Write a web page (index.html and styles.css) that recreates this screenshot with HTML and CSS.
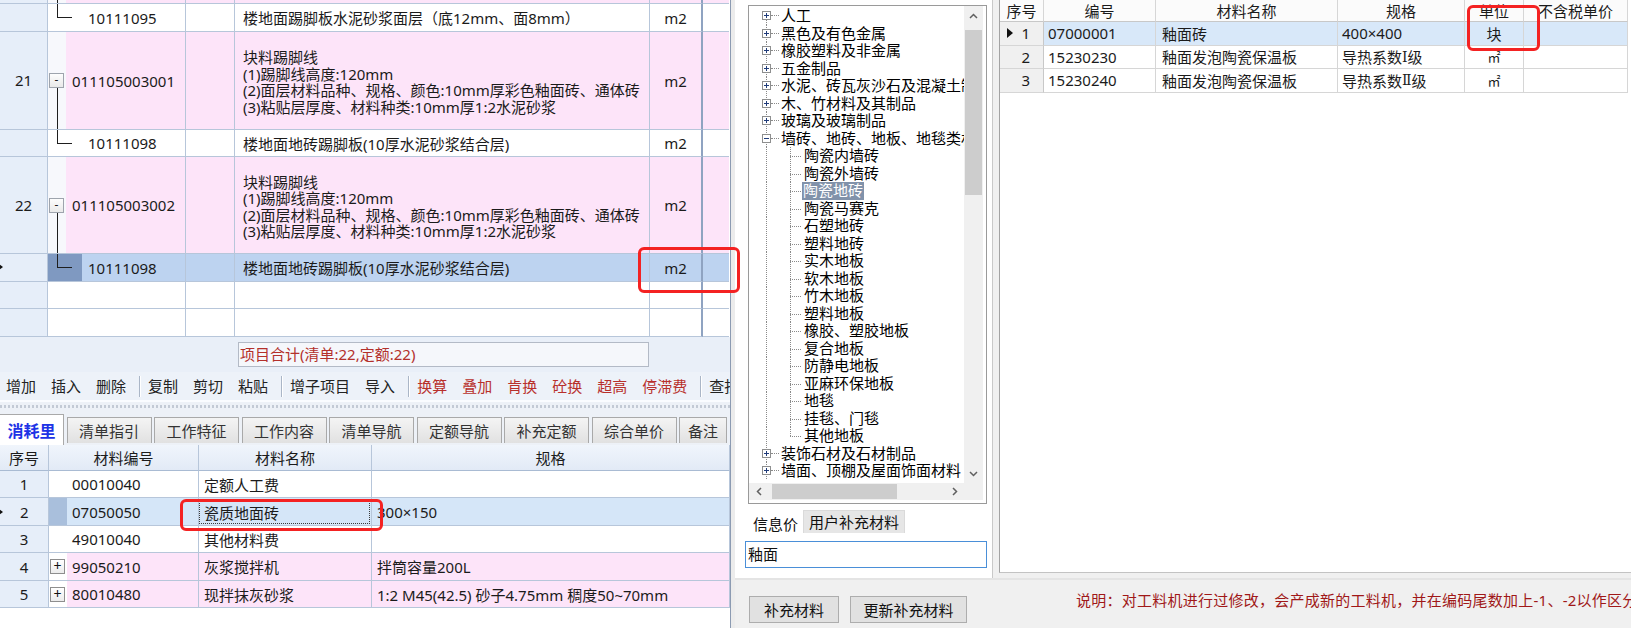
FILE: index.html
```html
<!DOCTYPE html>
<html lang="zh-CN">
<head>
<meta charset="utf-8">
<title>工料机</title>
<link rel="stylesheet" href="styles.css">
</head>
<body>
<div class="app">
  <div class="left">
    <div class="tg">
      <div class="tr pk h4">
        <div class="num"></div>
        <div class="c2"><span class="pg"><span class="vl full"></span></span></div>
        <div class="c3"></div><div class="c4"></div><div class="c5"></div><div class="c6"></div>
      </div>
      <div class="tr h28">
        <div class="num"></div>
        <div class="c2"><span class="cg"><span class="lt"></span><span class="sp"></span></span><span class="code">10111095</span></div>
        <div class="c3"></div><div class="c4">楼地面踢脚板水泥砂浆面层（底12mm、面8mm）</div><div class="c5">m2</div><div class="c6"></div>
      </div>
      <div class="tr pk h98">
        <div class="num">21</div>
        <div class="c2"><span class="pg"><span class="sp"></span><span class="box">-</span><span class="vl"></span></span><span class="code">011105003001</span></div>
        <div class="c3"></div>
        <div class="c4"><div class="ml"><div>块料踢脚线</div><div>(1)踢脚线高度:120mm</div><div>(2)面层材料品种、规格、颜色:10mm厚彩色釉面砖、通体砖</div><div>(3)粘贴层厚度、材料种类:10mm厚1:2水泥砂浆</div></div></div>
        <div class="c5">m2</div><div class="c6"></div>
      </div>
      <div class="tr h27">
        <div class="num"></div>
        <div class="c2"><span class="cg"><span class="lt"></span><span class="sp"></span></span><span class="code">10111098</span></div>
        <div class="c3"></div><div class="c4">楼地面地砖踢脚板(10厚水泥砂浆结合层)</div><div class="c5">m2</div><div class="c6"></div>
      </div>
      <div class="tr pk h97">
        <div class="num">22</div>
        <div class="c2"><span class="pg"><span class="sp"></span><span class="box">-</span><span class="vl"></span></span><span class="code">011105003002</span></div>
        <div class="c3"></div>
        <div class="c4"><div class="ml"><div>块料踢脚线</div><div>(1)踢脚线高度:120mm</div><div>(2)面层材料品种、规格、颜色:10mm厚彩色釉面砖、通体砖</div><div>(3)粘贴层厚度、材料种类:10mm厚1:2水泥砂浆</div></div></div>
        <div class="c5">m2</div><div class="c6"></div>
      </div>
      <div class="tr sel h28">
        <div class="num mkcell"><i class="mk"></i></div>
        <div class="c2"><span class="cg"><span class="lt"></span><span class="sp"></span></span><span class="code">10111098</span></div>
        <div class="c3"></div><div class="c4">楼地面地砖踢脚板(10厚水泥砂浆结合层)</div><div class="c5">m2</div><div class="c6"></div>
      </div>
      <div class="tr h27">
        <div class="num"></div><div class="c2"></div><div class="c3"></div><div class="c4"></div><div class="c5"></div><div class="c6"></div>
      </div>
      <div class="tr h28">
        <div class="num"></div><div class="c2"></div><div class="c3"></div><div class="c4"></div><div class="c5"></div><div class="c6"></div>
      </div>
    </div>

    <div class="status"><div class="sbox">项目合计(清单:22,定额:22)</div></div>

    <div class="toolbar">
      <span class="tb">增加</span><span class="tb">插入</span><span class="tb">删除</span><span class="sep"></span>
      <span class="tb">复制</span><span class="tb">剪切</span><span class="tb">粘贴</span><span class="sep"></span>
      <span class="tb">增子项目</span><span class="tb">导入</span><span class="sep"></span>
      <span class="tb r">换算</span><span class="tb r">叠加</span><span class="tb r">肯换</span><span class="tb r">砼换</span><span class="tb r">超高</span><span class="tb r">停滞费</span><span class="sep"></span>
      <span class="tb">查找</span>
    </div>

    <div class="splitter"></div>

    <div class="tabs">
      <div class="tab act">消耗里</div>
      <div class="tab">清单指引</div>
      <div class="tab">工作特征</div>
      <div class="tab">工作内容</div>
      <div class="tab">清单导航</div>
      <div class="tab">定额导航</div>
      <div class="tab">补充定额</div>
      <div class="tab">综合单价</div>
      <div class="tab last">备注</div>
    </div>

    <div class="bgd">
      <div class="br bh">
        <div>序号</div><div>材料编号</div><div>材料名称</div><div>规格</div>
      </div>
      <div class="br r27">
        <div class="num">1</div><div class="b2"><span class="bg0"></span><span class="code2">00010040</span></div><div class="b3">定额人工费</div><div class="b4"></div>
      </div>
      <div class="br r28 bsel">
        <div class="num"><i class="mk"></i><span class="nn">2</span></div><div class="b2"><span class="bg0"></span><span class="code2">07050050</span></div><div class="b3"><div class="focus">瓷质地面砖</div></div><div class="b4">300×150</div>
      </div>
      <div class="br r27">
        <div class="num">3</div><div class="b2"><span class="bg0"></span><span class="code2">49010040</span></div><div class="b3">其他材料费</div><div class="b4"></div>
      </div>
      <div class="br r28 bpk">
        <div class="num">4</div><div class="b2"><span class="bg0"><span class="pbox">+</span></span><span class="code2">99050210</span></div><div class="b3">灰浆搅拌机</div><div class="b4">拌筒容量200L</div>
      </div>
      <div class="br r27 bpk">
        <div class="num">5</div><div class="b2"><span class="bg0"><span class="pbox">+</span></span><span class="code2">80010480</span></div><div class="b3">现拌抹灰砂浆</div><div class="b4">1:2 M45(42.5) 砂子4.75mm 稠度50~70mm</div>
      </div>
    </div>
  </div>

  <div class="right">
    <div class="rmain">
      <div class="lpane">
        <div class="treebox">
          <div class="tarea">
            <div class="tcontent">
              <div class="ti"><span class="g first"><svg class="bx" width="9" height="9" viewBox="0 0 9 9"><rect x=".5" y=".5" width="8" height="8" fill="#fff" stroke="#8e8f8f"/><path d="M2 4.5h5M4.5 2v5" stroke="#203c7a"/></svg></span><span class="hc"></span>人工</div>
              <div class="ti"><span class="g"><svg class="bx" width="9" height="9" viewBox="0 0 9 9"><rect x=".5" y=".5" width="8" height="8" fill="#fff" stroke="#8e8f8f"/><path d="M2 4.5h5M4.5 2v5" stroke="#203c7a"/></svg></span><span class="hc"></span>黑色及有色金属</div>
              <div class="ti"><span class="g"><svg class="bx" width="9" height="9" viewBox="0 0 9 9"><rect x=".5" y=".5" width="8" height="8" fill="#fff" stroke="#8e8f8f"/><path d="M2 4.5h5M4.5 2v5" stroke="#203c7a"/></svg></span><span class="hc"></span>橡胶塑料及非金属</div>
              <div class="ti"><span class="g"><svg class="bx" width="9" height="9" viewBox="0 0 9 9"><rect x=".5" y=".5" width="8" height="8" fill="#fff" stroke="#8e8f8f"/><path d="M2 4.5h5M4.5 2v5" stroke="#203c7a"/></svg></span><span class="hc"></span>五金制品</div>
              <div class="ti"><span class="g"><svg class="bx" width="9" height="9" viewBox="0 0 9 9"><rect x=".5" y=".5" width="8" height="8" fill="#fff" stroke="#8e8f8f"/><path d="M2 4.5h5M4.5 2v5" stroke="#203c7a"/></svg></span><span class="hc"></span>水泥、砖瓦灰沙石及混凝土制品</div>
              <div class="ti"><span class="g"><svg class="bx" width="9" height="9" viewBox="0 0 9 9"><rect x=".5" y=".5" width="8" height="8" fill="#fff" stroke="#8e8f8f"/><path d="M2 4.5h5M4.5 2v5" stroke="#203c7a"/></svg></span><span class="hc"></span>木、竹材料及其制品</div>
              <div class="ti"><span class="g"><svg class="bx" width="9" height="9" viewBox="0 0 9 9"><rect x=".5" y=".5" width="8" height="8" fill="#fff" stroke="#8e8f8f"/><path d="M2 4.5h5M4.5 2v5" stroke="#203c7a"/></svg></span><span class="hc"></span>玻璃及玻璃制品</div>
              <div class="ti"><span class="g"><svg class="bx" width="9" height="9" viewBox="0 0 9 9"><rect x=".5" y=".5" width="8" height="8" fill="#fff" stroke="#8e8f8f"/><path d="M2 4.5h5" stroke="#203c7a"/></svg></span><span class="hc"></span>墙砖、地砖、地板、地毯类材料</div>
              <div class="ti"><span class="g"></span><span class="g2"></span><span class="cl"></span>陶瓷内墙砖</div>
              <div class="ti"><span class="g"></span><span class="g2"></span><span class="cl"></span>陶瓷外墙砖</div>
              <div class="ti"><span class="g"></span><span class="g2"></span><span class="cl"></span><span class="tsel">陶瓷地砖</span></div>
              <div class="ti"><span class="g"></span><span class="g2"></span><span class="cl"></span>陶瓷马赛克</div>
              <div class="ti"><span class="g"></span><span class="g2"></span><span class="cl"></span>石塑地砖</div>
              <div class="ti"><span class="g"></span><span class="g2"></span><span class="cl"></span>塑料地砖</div>
              <div class="ti"><span class="g"></span><span class="g2"></span><span class="cl"></span>实木地板</div>
              <div class="ti"><span class="g"></span><span class="g2"></span><span class="cl"></span>软木地板</div>
              <div class="ti"><span class="g"></span><span class="g2"></span><span class="cl"></span>竹木地板</div>
              <div class="ti"><span class="g"></span><span class="g2"></span><span class="cl"></span>塑料地板</div>
              <div class="ti"><span class="g"></span><span class="g2"></span><span class="cl"></span>橡胶、塑胶地板</div>
              <div class="ti"><span class="g"></span><span class="g2"></span><span class="cl"></span>复合地板</div>
              <div class="ti"><span class="g"></span><span class="g2"></span><span class="cl"></span>防静电地板</div>
              <div class="ti"><span class="g"></span><span class="g2"></span><span class="cl"></span>亚麻环保地板</div>
              <div class="ti"><span class="g"></span><span class="g2"></span><span class="cl"></span>地毯</div>
              <div class="ti"><span class="g"></span><span class="g2"></span><span class="cl"></span>挂毯、门毯</div>
              <div class="ti"><span class="g"></span><span class="g2"></span><span class="cl lastc"></span>其他地板</div>
              <div class="ti"><span class="g"><svg class="bx" width="9" height="9" viewBox="0 0 9 9"><rect x=".5" y=".5" width="8" height="8" fill="#fff" stroke="#8e8f8f"/><path d="M2 4.5h5M4.5 2v5" stroke="#203c7a"/></svg></span><span class="hc"></span>装饰石材及石材制品</div>
              <div class="ti"><span class="g"><svg class="bx" width="9" height="9" viewBox="0 0 9 9"><rect x=".5" y=".5" width="8" height="8" fill="#fff" stroke="#8e8f8f"/><path d="M2 4.5h5M4.5 2v5" stroke="#203c7a"/></svg></span><span class="hc"></span>墙面、顶棚及屋面饰面材料</div>
            </div>
            <div class="vs">
              <span class="arr"><svg width="9" height="6" viewBox="0 0 9 6"><path d="M1 5l3.5-3.5L8 5" fill="none" stroke="#606060" stroke-width="1.5"/></svg></span>
              <span class="vthumb"></span>
              <span class="vtrack"></span>
              <span class="arr"><svg width="9" height="6" viewBox="0 0 9 6"><path d="M1 1l3.5 3.5L8 1" fill="none" stroke="#606060" stroke-width="1.5"/></svg></span>
            </div>
          </div>
          <div class="hs">
            <span class="harr"><svg width="6" height="9" viewBox="0 0 6 9"><path d="M5 1L1.5 4.5 5 8" fill="none" stroke="#606060" stroke-width="1.5"/></svg></span>
            <span class="hthumb"></span>
            <span class="htrack"></span>
            <span class="harr"><svg width="6" height="9" viewBox="0 0 6 9"><path d="M1 1l3.5 3.5L1 8" fill="none" stroke="#606060" stroke-width="1.5"/></svg></span>
            <span class="corner"></span>
          </div>
        </div>
        <div class="itabs">
          <div class="itab on">信息价</div>
          <div class="itab">用户补充材料</div>
        </div>
        <div class="ibody">
          <div class="inp">釉面</div>
        </div>
      </div>
      <div class="rgw">
        <div class="rg">
          <div class="rr rh">
            <div>序号</div><div>编号</div><div>材料名称</div><div>规格</div><div>单位</div><div>不含税单价</div>
          </div>
          <div class="rr rsel">
            <div class="rn"><i class="rarrow"></i><span>1</span></div><div class="l4">07000001</div><div class="l6">釉面砖</div><div class="l4">400×400</div><div class="ctr">块</div><div></div>
          </div>
          <div class="rr">
            <div class="rn"><span>2</span></div><div class="l4">15230230</div><div class="l6">釉面发泡陶瓷保温板</div><div class="l4">导热系数<span class="rom">Ⅰ</span>级</div><div class="ctr sq">㎡</div><div></div>
          </div>
          <div class="rr">
            <div class="rn"><span>3</span></div><div class="l4">15230240</div><div class="l6">釉面发泡陶瓷保温板</div><div class="l4">导热系数<span class="rom">Ⅱ</span>级</div><div class="ctr sq">㎡</div><div></div>
          </div>
        </div>
      </div>
    </div>
    <div class="bbar">
      <div class="btn b1">补充材料</div>
      <div class="btn b2b">更新补充材料</div>
      <div class="note">说明：对工料机进行过修改，会产成新的工料机，并在编码尾数加上-1、-2以作区分</div>
    </div>
  </div>

  <div class="anno a1"></div>
  <div class="anno a2"></div>
  <div class="anno a3"></div>
</div>
</body>
</html>
```

FILE: styles.css
```css
* { box-sizing: border-box; }
html, body { margin: 0; padding: 0; }
body {
  width: 1631px;
  height: 628px;
  overflow: hidden;
  font-family: "Noto Sans", "Noto Sans CJK SC", sans-serif;
  font-size: 15px;
  color: #1b1b1b;
  background: #fff;
}
.app { position: relative; display: flex; width: 1631px; height: 628px; }

/* ---------- left window ---------- */
.left {
  width: 731px;
  flex: none;
  border-right: 1px solid #8c9bb2;
  background: #fff;
  display: flex;
  flex-direction: column;
  overflow: hidden;
}
.tg { height: 337px; overflow: hidden; flex: none; }
.tr {
  display: grid;
  grid-template-columns: 48px 138px 49px 415px 53px 26px;
}
.tr > div {
  border-right: 1px solid #b7c6da;
  border-bottom: 1px solid #b7c6da;
  display: flex;
  align-items: center;
  overflow: hidden;
  white-space: nowrap;
  background: #fff;
}
.tr > .num { background: #e6eef9; justify-content: center; padding-bottom: 1px; }
.tr > .c2 { align-items: stretch; }
.tr > .c4 { padding-left: 8px; }
.tr > .c5 { border-right: 2px solid #8fa3c1; justify-content: center; }
.tr > .c6 { border-right: none; }
.h4 { height: 4px; }
.h27 { height: 27px; }
.h28 { height: 28px; }
.h97 { height: 97px; }
.h98 { height: 98px; }
.pk > div:not(.num) { background: #fde4f9; }
.sel > div:not(.num) { background: #bdd3f0; }

.code { display: flex; align-items: center; padding-left: 6px; }
.pg {
  width: 18px; flex: none;
  display: flex; flex-direction: column;
  background: #f7f8fc;
}
.pg .sp { flex: 1; }
.pg .box {
  width: 15px; height: 15px; margin-left: 1px; flex: none;
  border: 1px solid #9ea4ad;
  background: linear-gradient(#fdfdfd, #e9e9e9);
  font-size: 12px; line-height: 11px; text-align: center; color: #222;
}
.pg .vl { flex: 1; margin-left: 9px; width: 0; border-left: 1px solid #1e1e1e; }
.cg {
  width: 34px; flex: none;
  display: flex; flex-direction: column;
}
.sel .cg { background: #7f99c1; }
.cg .lt {
  flex: 1;
  margin-left: 9px; width: 15px;
  border-left: 1px solid #1e1e1e;
  border-bottom: 1px solid #1e1e1e;
}
.cg .sp { flex: 1; }
.ml { padding-top: 3px; white-space: nowrap; }
.ml > div { height: 16.5px; line-height: 16.5px; }
.mkcell { justify-content: flex-start !important; }
.mk {
  display: inline-block; width: 0; height: 0;
  border-left: 4px solid #111;
  border-top: 3px solid transparent;
  border-bottom: 3px solid transparent;
  margin-left: -1px;
}

/* status + toolbar */
.status {
  height: 35px; flex: none;
  background: #e9eff8;
  padding: 5px 0 0 238px;
}
.sbox {
  width: 411px; height: 25px;
  border: 1px solid #b3bac6;
  background: #f5f7fb;
  color: #b3302b;
  padding-left: 1px;
  line-height: 22px;
  font-size: 15px;
}
.toolbar {
  height: 28px; flex: none;
  background: #edf2f9;
  display: flex; align-items: center;
  padding-left: 6px;
  white-space: nowrap;
  overflow: hidden;
  line-height: 20px;
}
.tb { margin-right: 15px; flex: none; color: #222; }
.tb.r { color: #b8302c; }
.sep {
  width: 2px; height: 21px; flex: none;
  margin: 0 7px 0 -2px;
  border-left: 1px solid #aab6c7;
  border-right: 1px solid #ffffff;
}
.splitter {
  height: 15px; flex: none;
  background: #edf1f7;
  border-top: 2px solid #fafcff;
  padding-top: 3px;
}
.splitter::before {
  content: "";
  display: block;
  height: 3px;
  background: repeating-linear-gradient(90deg, #c3cad5 0 2px, transparent 2px 4px);
}
.tabs {
  height: 30px; flex: none;
  display: flex; align-items: flex-end;
  background: #edf1f7;
}
.tab {
  width: 85px; height: 26px; flex: none;
  margin: 0 0 2px 2.5px;
  border: 1px solid #a9a9a9;
  border-bottom: none;
  background: linear-gradient(#f4f4f4, #e1e1e1);
  color: #333;
  display: flex; align-items: center; justify-content: center;
  font-size: 15px;
}
.tab.act {
  width: 64px; height: 31px; margin: 0;
  background: #fff;
  color: #1d33e6;
  font-weight: bold;
  font-size: 16px;
  border-left: none;
}
.tab.last { width: 48px; }

/* bottom grid */
.bgd { flex: none; }
.br {
  display: grid;
  grid-template-columns: 49px 150px 173px 358px;
}
.br > div {
  border-right: 1px solid #b7c6da;
  border-bottom: 1px solid #b7c6da;
  display: flex; align-items: center;
  white-space: nowrap; overflow: hidden;
  background: #fff;
}
.bh { height: 26px; }
.bh > div {
  background: linear-gradient(#f0f5fc, #e2eaf6);
  justify-content: center;
  border-bottom-color: #a9bbd3;
}
.r27 { height: 27px; }
.r28 { height: 28px; }
.br > .num { background: #e6eef9; justify-content: center; }
.bsel > .num { justify-content: flex-start; }
.bsel .nn { margin-left: 17px; }
.b2 { align-items: stretch !important; }
.bg0 { width: 18px; flex: none; display: flex; align-items: center; }
.code2 { display: flex; align-items: center; padding-left: 5px; }
.b3, .b4 { padding-left: 5px; }
.bsel > div:not(.num) { background: #d5e6f8; }
.bsel .bg0 { background: #a9bfdc; }
.bpk > div:not(.num) { background: #fde4f9; }
.bpk .bg0 { background: #fff; }
.pbox {
  width: 15px; height: 15px; margin-left: 1px;
  border: 1px solid #8e8e8e;
  background: linear-gradient(#fff, #ececec);
  font-size: 14px; line-height: 12px; text-align: center; color: #111;
}
.b3 .focus {
  flex: 1; align-self: stretch;
  margin: 3px 1px 1px 0;
  border: 1px dotted #3a3a3a;
  padding-left: 4px;
  display: flex; align-items: center;
}
.bsel > .b3 { padding-left: 0; }

/* ---------- right dialog ---------- */
.right {
  flex: 1;
  display: flex; flex-direction: column;
  background: #ececec;
  padding-left: 4px;
}
.rmain { height: 578px; display: flex; background: #fff; flex: none; }
.lpane { width: 257px; flex: none; padding: 5px 0 0 13px; background: #fff; }
.treebox {
  width: 239px; height: 499px;
  border: 1px solid #9a9a9a;
  display: flex; flex-direction: column;
  background: #fff;
}
.tarea { height: 477px; display: flex; flex: none; }
.tcontent { width: 215px; flex: none; overflow: hidden; padding-top: 1px; color: #000; }
.ti {
  display: flex; align-items: center;
  height: 17.5px; line-height: 17.5px;
  white-space: nowrap;
}
.ti .g {
  width: 22px; align-self: stretch; flex: none;
  display: flex; align-items: center;
  background: repeating-linear-gradient(to bottom, #8a8a8a 0 1px, transparent 1px 2px) 17px 0 / 1px 100% no-repeat;
}
.ti .g.first { background-position: 17px 9px; }
.ti .bx { margin-left: 13px; flex: none; }
.ti .hc { width: 8px; height: 1px; flex: none; margin-right: 2px; border-top: 1px dotted #8a8a8a; }
.ti .g2 { width: 19px; flex: none; }
.ti .cl {
  width: 12px; align-self: stretch; flex: none; margin-right: 2px;
  background:
    repeating-linear-gradient(to bottom, #8a8a8a 0 1px, transparent 1px 2px) 0 0 / 1px 100% no-repeat,
    repeating-linear-gradient(to right, #8a8a8a 0 1px, transparent 1px 2px) 0 9px / 100% 1px no-repeat;
}
.ti .cl.lastc {
  background:
    repeating-linear-gradient(to bottom, #8a8a8a 0 1px, transparent 1px 2px) 0 0 / 1px 9px no-repeat,
    repeating-linear-gradient(to right, #8a8a8a 0 1px, transparent 1px 2px) 0 9px / 100% 1px no-repeat;
}
.tsel { background: #8192aa; color: #fff; padding: 0 1px; margin-left: -2px; }
.vs {
  width: 19px; flex: none; margin-right: 3px;
  background: #f0f0f0;
  display: flex; flex-direction: column; align-items: center;
}
.arr { height: 19px; flex: none; display: flex; align-items: center; justify-content: center; }
.vthumb { width: 17px; height: 165px; margin-top: 5px; background: #cdcdcd; flex: none; }
.vtrack { flex: 1; }
.hs { height: 17px; flex: none; display: flex; background: #f0f0f0; margin-right: 3px; }
.harr { width: 19px; flex: none; display: flex; align-items: center; justify-content: center; }
.hthumb { width: 125px; flex: none; margin: 1px 0 1px 4px; background: #cdcdcd; }
.htrack { flex: 1; }
.corner { width: 19px; flex: none; background: #f0f0f0; }

.itabs { display: flex; margin-top: 6px; height: 23px; }
.itab {
  height: 23px; display: flex; align-items: center; justify-content: center;
  font-size: 15px; color: #111;
}
.itab.on { width: 55px; background: #fff; padding-top: 4px; }
.itab:not(.on) { width: 102px; background: #e6e6e6; border: 1px solid #dadada; border-bottom: none; padding-bottom: 2px; }
.ibody { padding-top: 8px; margin-left: -3px; }
.inp {
  width: 242px; height: 27px;
  border: 1px solid #4a8fd8;
  padding-left: 2px;
  line-height: 25px;
  font-size: 15px;
  color: #111;
  background: #fff;
}

.rgw {
  flex: 1;
  border-left: 1px solid #c9c9c9;
  background: #f0f0f0;
  padding-left: 6px;
}
.rg {
  height: 573px;
  background: #fff;
  border-left: 1px solid #a3a3a3;
  border-bottom: 1px solid #c3c3c3;
}
.rr {
  display: grid;
  grid-template-columns: 44px 112px 182px 127px 59px 104px;
  height: 23.5px;
}
.rr > div {
  border-right: 1px solid #d6d6d6;
  border-bottom: 1px solid #d6d6d6;
  display: flex; align-items: center;
  white-space: nowrap; overflow: hidden;
  color: #1b1b1b;
}
.rh { height: 22px; }
.rh > div { justify-content: center; background: #fbfbfb; border-bottom-color: #c8c8c8; }
.rn { background: #f0f0f0; justify-content: flex-end; padding-right: 13px; }
.rr > .rn { border-right-color: #c8c8c8; }
.rsel > div:not(.rn) { background: #d8e8f9; }
.rsel > .rn { justify-content: space-between; padding-left: 7px; }
.rarrow {
  display: inline-block; width: 0; height: 0;
  border-left: 6px solid #111;
  border-top: 5px solid transparent;
  border-bottom: 5px solid transparent;
}
.l4 { padding-left: 4px; }
.l6 { padding-left: 6px; }
.ctr { justify-content: center; }
.sq { font-size: 13px; }
.rom { font-family: "DejaVu Serif", "Liberation Serif", serif; font-size: 14px; }

.bbar {
  height: 50px; flex: none;
  background: #f0f0f0;
  border-top: 2px solid #e4e4e4;
  display: flex; align-items: flex-start;
  padding-left: 14px;
}
.btn {
  height: 27px; margin-top: 16px;
  background: #e1e1e1;
  border: 1px solid #adadad;
  display: flex; align-items: center; justify-content: center;
  font-size: 15px; color: #111;
  flex: none;
}
.b1 { width: 90px; }
.b2b { width: 117px; margin-left: 11px; }
.note {
  margin: 11px 0 0 109px;
  color: #a01818;
  font-size: 15px;
  line-height: 18px;
  letter-spacing: 0.25px;
  white-space: nowrap;
}

/* red annotation frames */
.anno {
  position: absolute;
  border: 3px solid #f42222;
  border-radius: 6px;
  pointer-events: none;
}
.a1 { left: 638px; top: 247px; width: 102px; height: 46px; }
.a2 { left: 180px; top: 499px; width: 203px; height: 32px; }
.a3 { left: 1467px; top: 5px; width: 73px; height: 46px; }
```
